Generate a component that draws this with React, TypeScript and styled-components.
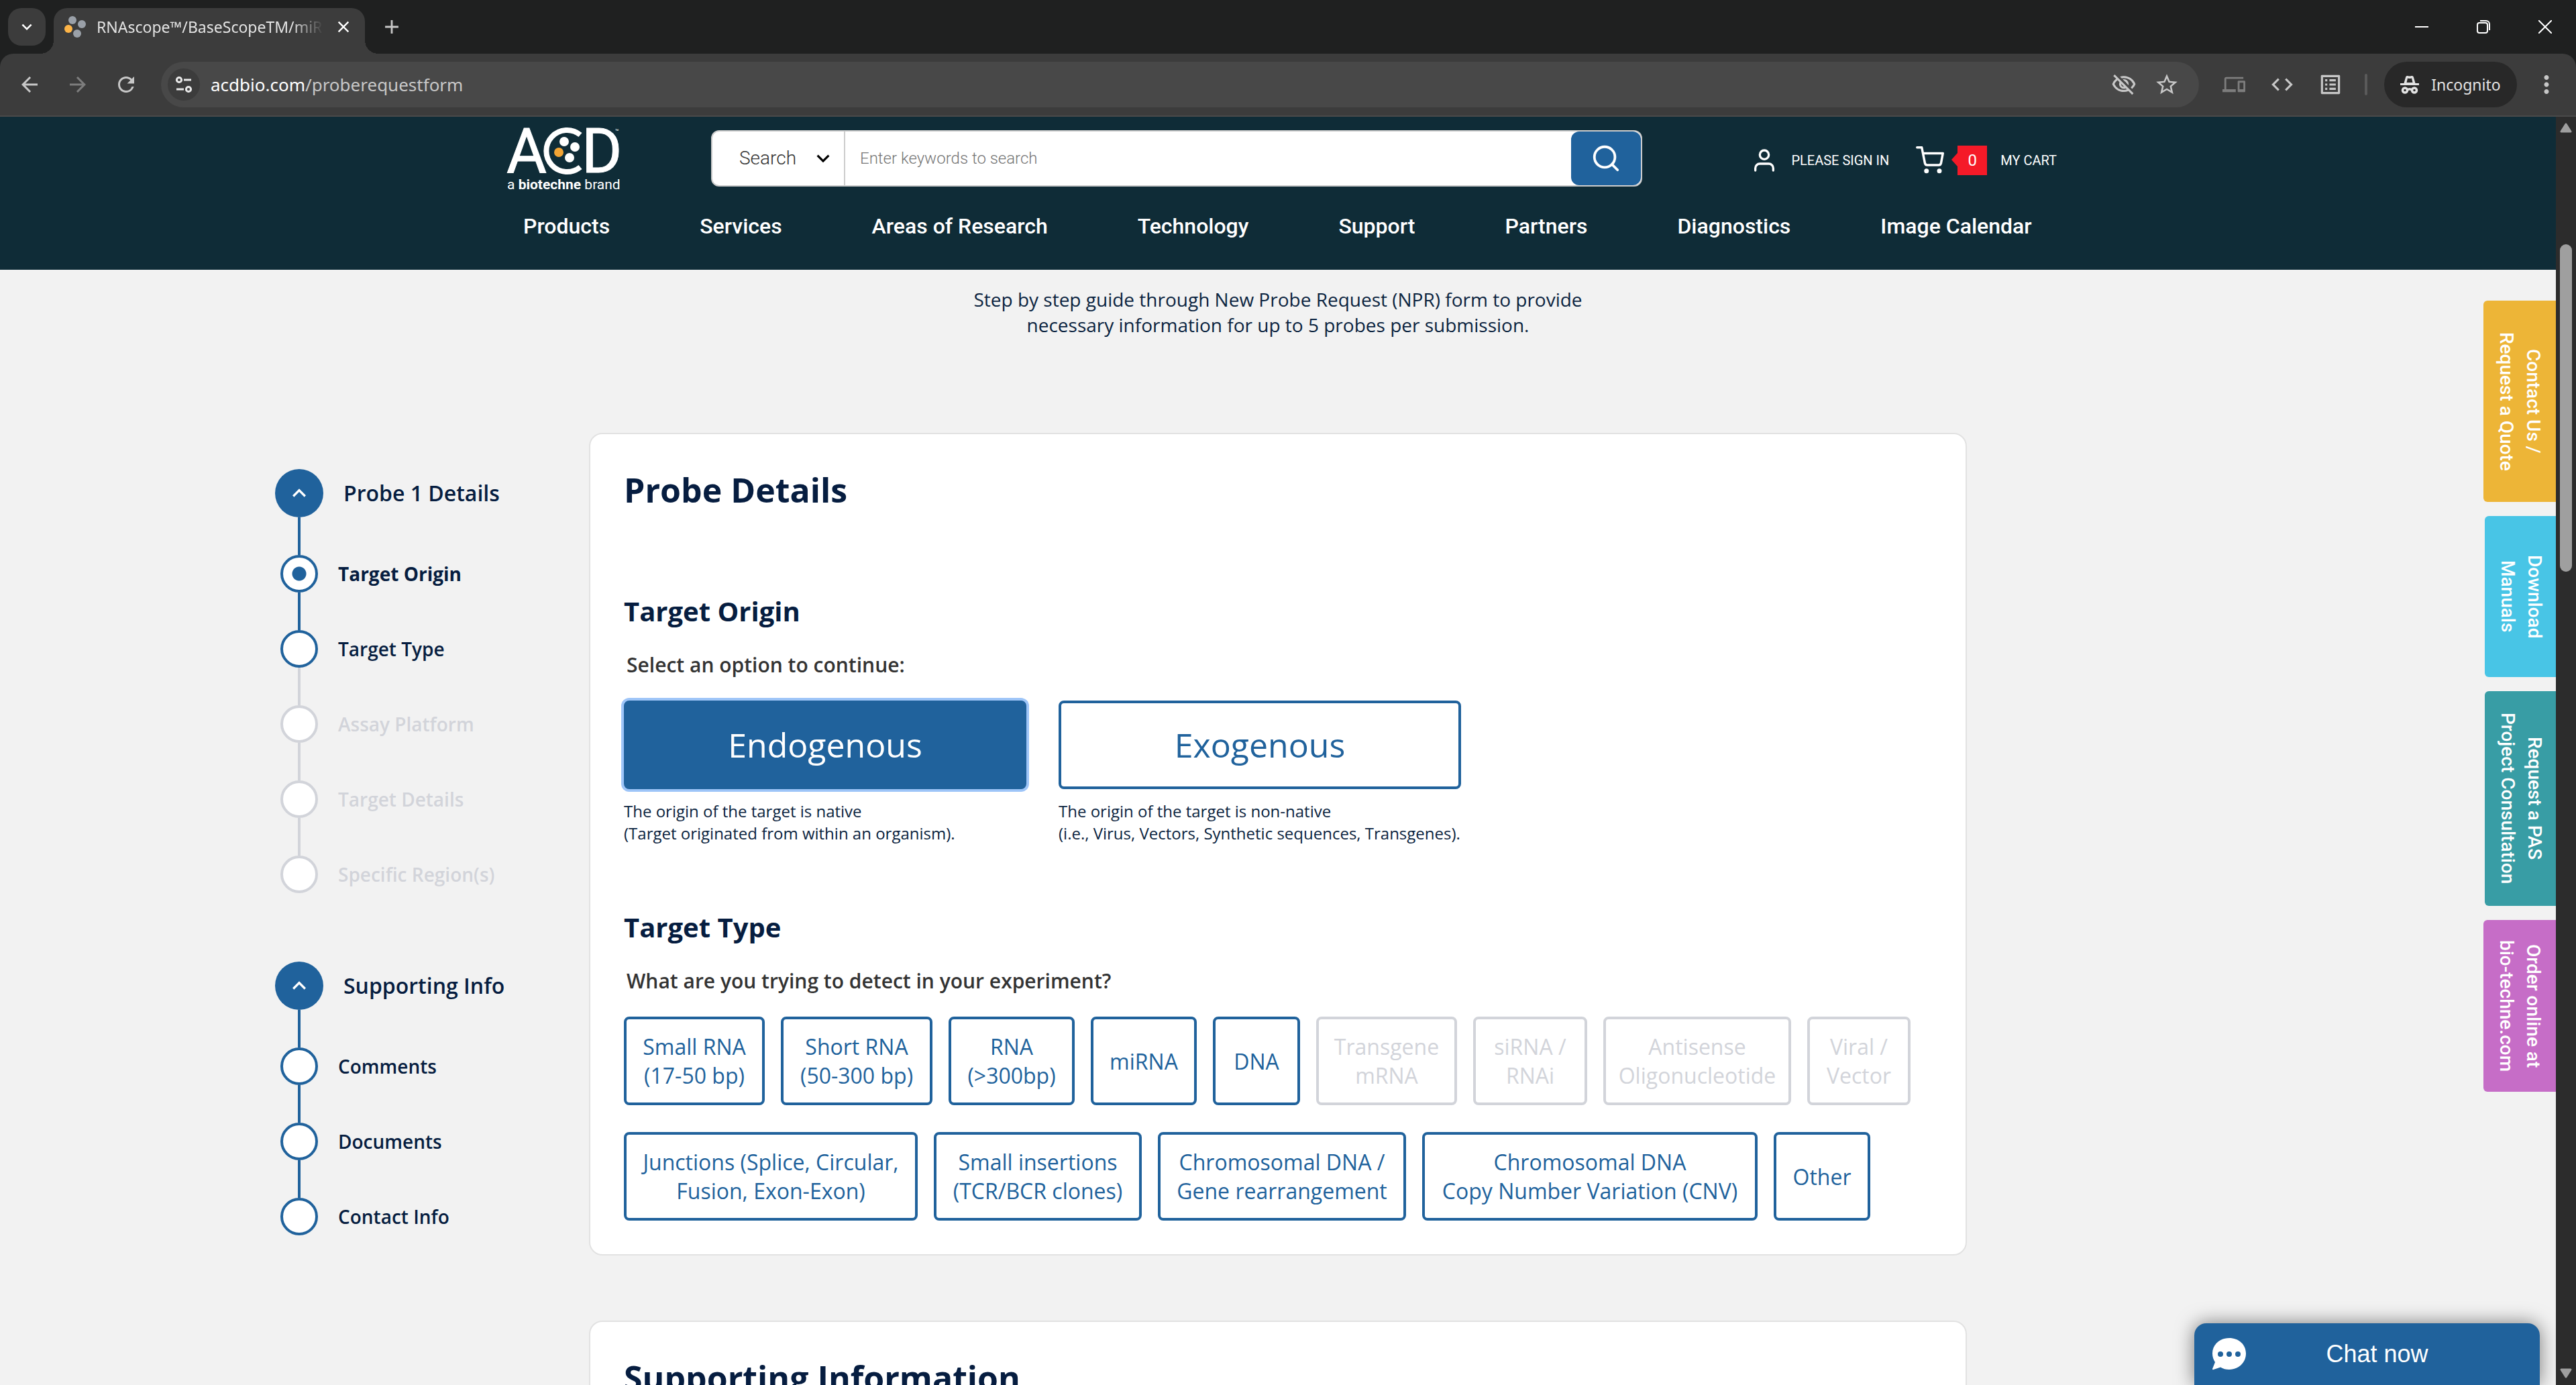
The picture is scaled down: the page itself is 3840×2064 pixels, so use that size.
import React from "react";
import styled, { createGlobalStyle, css } from "styled-components";
import {
  MdAdd,
  MdArrowBack,
  MdArrowForward,
  MdClose,
  MdCode,
  MdDevices,
  MdKeyboardArrowDown,
  MdKeyboardArrowUp,
  MdMoreVert,
  MdOutlineListAlt,
  MdOutlineVisibilityOff,
  MdRefresh,
  MdStarBorder,
} from "react-icons/md";
import { FiSearch, FiShoppingCart, FiUser } from "react-icons/fi";

const color = {
  frame: "#1f2020",
  toolbar: "#3c3c3c",
  omnibox: "#484848",
  teal: "#0f2c37",
  blue: "#20629c",
  navy: "#061d40",
  muted: "#d2d4da",
  page: "#f2f2f2",
  icon: "#c7c7c7",
};

const chromeFont = '"Noto Sans", "Open Sans", sans-serif';
const openSans = '"Open Sans", sans-serif';
const roboto = 'Roboto, "Liberation Sans", sans-serif';

const GlobalStyle = createGlobalStyle`
  *, *::before, *::after { box-sizing: border-box; }
  body { margin: 0; background: ${color.page}; font-family: ${openSans}; }
  button, input, select { font: inherit; margin: 0; }
  button { cursor: pointer; }
  h1, h2, p, ul, ol { margin: 0; padding: 0; }
  ul, ol { list-style: none; }
  a { text-decoration: none; color: inherit; }
  svg { display: block; flex: none; }
`;

const Window = styled.div`
  display: flex;
  flex-direction: column;
  height: 100vh;
  overflow: hidden;
`;

/* ---------- browser frame ---------- */

const TabStrip = styled.div`
  display: flex;
  height: 80px;
  padding: 12px 0 0 12px;
  background: ${color.frame};
`;

const PlainButton = styled.button`
  display: flex;
  align-items: center;
  justify-content: center;
  padding: 0;
  border: 0;
  background: none;
  color: ${color.icon};
`;

const TabSearch = styled(PlainButton)`
  width: 56px;
  height: 56px;
  border-radius: 20px;
  background: ${color.toolbar};
  color: #ffffff;
`;

const Tab = styled.div`
  position: relative;
  display: flex;
  align-items: center;
  width: 464px;
  height: 68px;
  margin-left: 12px;
  padding: 0 18px 12px 16px;
  border-radius: 20px 20px 0 0;
  background: ${color.toolbar};
  color: #e3e3e3;
  font: 400 23px/32px ${chromeFont};

  &::before,
  &::after {
    content: "";
    position: absolute;
    bottom: 0;
    width: 20px;
    height: 20px;
  }
  &::before {
    left: -20px;
    background: radial-gradient(circle at 0 0, transparent 20px, ${color.toolbar} 20px);
  }
  &::after {
    right: -20px;
    background: radial-gradient(circle at 100% 0, transparent 20px, ${color.toolbar} 20px);
  }
`;

const TabTitle = styled.span`
  flex: 1;
  min-width: 0;
  margin: 0 16px;
  white-space: nowrap;
  mask-image: linear-gradient(90deg, #000 86%, transparent);
`;

const NewTab = styled(PlainButton)`
  width: 56px;
  height: 56px;
  margin-left: 12px;
`;

const WindowControls = styled.div`
  display: flex;
  margin-left: auto;
`;

const WindowButton = styled(PlainButton)`
  width: 92px;
  height: 56px;
  color: #ffffff;
`;

const Toolbar = styled.div`
  background: ${color.frame};
`;

const ToolbarRow = styled.div`
  display: flex;
  align-items: center;
  height: 94px;
  padding: 12px 20px 12px 8px;
  border-bottom: 2px solid #4a4a4a;
  border-radius: 20px 20px 0 0;
  background: ${color.toolbar};
`;

const ToolButton = styled(PlainButton)<{ $dim?: boolean }>`
  width: 72px;
  height: 68px;
  color: ${(p) => (p.$dim ? "#7d7d7d" : color.icon)};
`;

const Omnibox = styled.div`
  display: flex;
  flex: 1;
  align-items: center;
  height: 68px;
  margin: 0 16px;
  padding: 0 16px 0 10px;
  border-radius: 34px;
  background: ${color.omnibox};
`;

const SiteInfo = styled(PlainButton)`
  width: 48px;
  height: 48px;
  border-radius: 50%;
  background: ${color.toolbar};
  color: #e8e8e8;
`;

const Address = styled.div`
  flex: 1;
  margin-left: 16px;
  color: #c7c7c7;
  font: 400 26px/40px ${chromeFont};

  b {
    color: #ffffff;
    font-weight: 400;
  }
`;

const OmniboxButton = styled(PlainButton)`
  width: 64px;
  height: 56px;
`;

const Divider = styled.span`
  width: 4px;
  height: 32px;
  margin: 0 25px 0 15px;
  border-radius: 2px;
  background: #5a5a5a;
`;

const IncognitoChip = styled.button`
  display: flex;
  align-items: center;
  justify-content: center;
  gap: 18px;
  width: 198px;
  height: 68px;
  padding: 0;
  border: 0;
  border-radius: 34px;
  background: #282828;
  color: #e3e3e3;
  font: 400 23px/32px ${chromeFont};
`;

const MenuButton = styled(PlainButton)`
  width: 48px;
  height: 48px;
  margin-left: 20px;
`;

const Viewport = styled.div`
  display: flex;
  flex: 1;
  min-height: 0;
`;

const Page = styled.div`
  position: relative;
  flex: 1;
  min-width: 0;
  overflow: hidden;
  background: ${color.page};
`;

const ScrollTrack = styled.div`
  display: flex;
  flex-direction: column;
  align-items: center;
  width: 30px;
  padding: 8px 0 9px;
  background: #2c2c2c;
`;

const ScrollThumb = styled.div`
  width: 18px;
  height: 488px;
  margin: 166px 0 auto;
  border-radius: 9px;
  background: #9f9f9f;
`;

/* ---------- site header ---------- */

const SiteHeader = styled.header`
  height: 228px;
  background: ${color.teal};
  color: #ffffff;
  font-family: ${roboto};
`;

const HeaderInner = styled.div`
  width: 100%;
  max-width: 2322px;
  margin: 0 auto;
  padding-left: 12px;
`;

const HeaderTop = styled.div`
  display: flex;
  align-items: center;
  padding-top: 15px;
`;

const LogoLink = styled.a`
  margin-right: 132px;
`;

const SearchBar = styled.form`
  display: flex;
  flex: 1;
  max-width: 1390px;
  height: 84px;
  margin-top: -6px;
  border: 2px solid #cccccc;
  border-radius: 12px;
  background: #ffffff;
`;

const SearchScope = styled.label`
  display: flex;
  align-items: center;
  width: 198px;
  padding: 0 12px 0 40px;
  border-right: 2px solid #cccccc;
  color: #000000;
`;

const ScopeSelect = styled.select`
  flex: 1;
  min-width: 0;
  padding: 0;
  border: 0;
  background: none;
  appearance: none;
  color: #333333;
  font: 300 28px/40px ${roboto};
`;

const SearchInput = styled.input`
  flex: 1;
  min-width: 0;
  padding: 0 22px;
  border: 0;
  background: none;
  color: #333333;
  font: 300 24px/40px ${roboto};

  &::placeholder {
    color: #757575;
    opacity: 1;
  }
`;

const SearchSubmit = styled(PlainButton)`
  width: 104px;
  border-radius: 12px;
  background: ${color.blue};
  color: #ffffff;
`;

const Account = styled.a`
  display: flex;
  align-items: center;
  gap: 20px;
  margin-left: 162px;
  font-size: 20px;
  line-height: 28px;
  white-space: nowrap;
`;

const Cart = styled.a`
  display: flex;
  align-items: center;
  margin-left: 40px;
  font-size: 20px;
  line-height: 28px;
  white-space: nowrap;
`;

const CartCount = styled.span`
  position: relative;
  width: 44px;
  height: 44px;
  margin: 0 20px;
  background: #f51a28;
  font-size: 24px;
  line-height: 44px;
  text-align: center;

  &::before {
    content: "";
    position: absolute;
    top: 11px;
    left: -9px;
    border: solid transparent;
    border-width: 10px 9px 10px 0;
    border-right-color: #f51a28;
  }
`;

const MainNav = styled.nav`
  display: flex;
  gap: 134px;
  padding: 24px 0 0 24px;
  font-size: 32px;
  font-weight: 500;
  line-height: 48px;
  white-space: nowrap;
`;

/* ---------- form layout ---------- */

const Intro = styled.p`
  padding: 25px 0 142px;
  color: #0b2440;
  font-size: 28px;
  line-height: 38px;
  text-align: center;
`;

const Layout = styled.div`
  display: grid;
  grid-template-columns: 1fr minmax(0, 2054px) 1fr;
`;

const Steps = styled.nav`
  justify-self: end;
  width: 468px;
  padding-top: 54px;
  color: ${color.navy};
`;

const StepGroup = styled.section`
  & + & {
    margin-top: 102px;
  }
`;

const stepRow = css`
  display: flex;
  align-items: center;
  padding: 0;
  border: 0;
  background: none;
  color: inherit;
`;

const GroupToggle = styled.button`
  ${stepRow}
  gap: 30px;
  font-size: 32px;
  font-weight: 600;
  line-height: 44px;
`;

const GroupIcon = styled.span`
  display: flex;
  align-items: center;
  justify-content: center;
  width: 72px;
  height: 72px;
  border-radius: 50%;
  background: ${color.blue};
  color: #ffffff;
`;

const StepItem = styled.li<{ $muted?: boolean }>`
  color: ${(p) => (p.$muted ? color.muted : color.navy)};

  &::before {
    content: "";
    display: block;
    width: 4px;
    height: 56px;
    margin-left: 34px;
    background: ${(p) => (p.$muted ? color.muted : color.blue)};
  }
`;

const StepButton = styled.button<{ $current?: boolean }>`
  ${stepRow}
  gap: 30px;
  margin-left: 8px;
  font-size: 28px;
  font-weight: ${(p) => (p.$current ? 700 : 600)};
  line-height: 38px;
`;

const Marker = styled.span<{ $muted?: boolean; $current?: boolean }>`
  width: 56px;
  height: 56px;
  border: 4px solid ${(p) => (p.$muted ? color.muted : color.blue)};
  border-radius: 50%;
  background: ${(p) =>
    p.$current
      ? `radial-gradient(circle, ${color.blue} 10px, #ffffff 11px)`
      : "#ffffff"};
`;

const Cards = styled.main`
  display: flex;
  flex-direction: column;
  gap: 97px;
`;

const Card = styled.section`
  padding: 50px;
  border: 2px solid #e2e2e2;
  border-radius: 20px;
  background: #ffffff;
`;

const CardTitle = styled.h1`
  color: ${color.navy};
  font-size: 50px;
  font-weight: 700;
  line-height: 66px;
`;

const Question = styled.section<{ $top: number }>`
  margin-top: ${(p) => p.$top}px;
`;

const QuestionTitle = styled.h2`
  color: ${color.navy};
  font-size: 40px;
  font-weight: 700;
  line-height: 56px;
`;

const Prompt = styled.p`
  margin: 31px 0 32px 4px;
  color: #333333;
  font-size: 30px;
  font-weight: 600;
  line-height: 42px;
`;

const OriginRow = styled.div`
  display: flex;
  gap: 48px;
`;

const Origin = styled.div`
  width: 600px;
  color: #0b2440;
  font-size: 24px;
  line-height: 33px;
  white-space: pre-line;
`;

const OriginButton = styled.button<{ $active?: boolean }>`
  display: block;
  width: 100%;
  height: 132px;
  margin-bottom: 16px;
  border: 4px solid ${color.blue};
  border-radius: 8px;
  background: ${(p) => (p.$active ? color.blue : "#ffffff")};
  box-shadow: ${(p) => (p.$active ? "0 0 0 4px #9ec5f8" : "none")};
  color: ${(p) => (p.$active ? "#ffffff" : color.blue)};
  font-size: 50px;
  line-height: 68px;
`;

const TypeRow = styled.div`
  display: flex;
  flex-wrap: wrap;
  gap: 24px;

  & + & {
    margin-top: 40px;
  }
`;

const TypeButton = styled.button<{ $width: number }>`
  width: ${(p) => p.$width}px;
  height: 132px;
  padding: 0;
  border: 4px solid ${color.blue};
  border-radius: 8px;
  background: #ffffff;
  color: ${color.blue};
  font-size: 32px;
  line-height: 43px;
  white-space: pre;

  &:disabled {
    border-color: ${color.muted};
    color: ${color.muted};
  }
`;

/* ---------- floating links ---------- */

const SideTabs = styled.aside`
  position: absolute;
  top: 274px;
  right: 0;
  display: flex;
  flex-direction: column;
  align-items: flex-end;
  gap: 21px;
`;

const SideTab = styled.a<{ $bg: string; $length: number; $inset: number }>`
  height: ${(p) => p.$length}px;
  padding: 0 ${(p) => p.$inset}px 0 14px;
  border-radius: 6px 0 0 6px;
  background: ${(p) => p.$bg};
  color: #ffffff;
  font: 500 28px/40px ${roboto};
  text-align: center;
  white-space: pre-line;
  writing-mode: vertical-rl;
`;

const ChatButton = styled.button`
  position: absolute;
  right: 24px;
  bottom: 0;
  display: flex;
  align-items: center;
  width: 515px;
  height: 92px;
  padding: 0 48px 0 26px;
  border: 0;
  border-radius: 18px 18px 0 0;
  background: ${color.blue};
  box-shadow: 0 0 28px rgba(0, 0, 0, 0.5);
  color: #ffffff;
  font: 400 36px/44px "Liberation Sans", Arial, sans-serif;

  span {
    flex: 1;
    text-align: center;
  }
`;

/* ---------- drawings ---------- */

const Favicon = () => (
  <svg width="32" height="32" viewBox="0 0 32 32" aria-hidden="true">
    <circle cx="12" cy="6" r="6" fill="#9aa0a8" />
    <circle cx="26" cy="12" r="6" fill="#9aa0a8" />
    <circle cx="6" cy="19" r="6" fill="#fdb447" />
    <circle cx="19" cy="26" r="6" fill="#9aa0a8" />
  </svg>
);

const TuneIcon = () => (
  <svg width="26" height="26" viewBox="0 0 26 26" fill="none" stroke="currentColor" strokeWidth="3" aria-hidden="true">
    <circle cx="6" cy="6" r="3.6" />
    <path d="M13 6h11M2 20h11" />
    <circle cx="20" cy="20" r="3.6" />
  </svg>
);

const IncognitoIcon = () => (
  <svg width="28" height="28" viewBox="0 0 28 28" aria-hidden="true">
    <path
      d="M5.500 12 8 3.200C8.600 1 10 .6 11.800 1.200c1.400.5 3 .5 4.400 0C18 .6 19.400 1 20 3.200L22.500 12z"
      fill="currentColor"
    />
    <path d="M11 4.500 9.500 11h9L17 4.500c-2 .8-4 .8-6 0z" fill="#282828" />
    <path d="M0 12h28v3H0z" fill="currentColor" />
    <g fill="none" stroke="currentColor" strokeWidth="3.5">
      <circle cx="7" cy="22.500" r="3.500" />
      <circle cx="21" cy="22.500" r="3.500" />
      <path d="M10.500 22c2-1.500 5-1.500 7 0" />
    </g>
  </svg>
);

const MinimizeIcon = () => (
  <svg width="20" height="20" viewBox="0 0 20 20" aria-hidden="true">
    <path d="M0 10h20" stroke="currentColor" strokeWidth="2" />
  </svg>
);

const RestoreIcon = () => (
  <svg width="20" height="20" viewBox="0 0 20 20" fill="none" stroke="currentColor" strokeWidth="2" aria-hidden="true">
    <rect x="1" y="4" width="15" height="15" rx="3" />
    <path d="M5 1h9a5 5 0 0 1 5 5v9" />
  </svg>
);

const CloseIcon = () => (
  <svg width="20" height="20" viewBox="0 0 20 20" aria-hidden="true">
    <path d="m0 0 20 20M20 0 0 20" stroke="currentColor" strokeWidth="2" />
  </svg>
);

const ScrollArrow = ({ down }: { down?: boolean }) => (
  <svg width="20" height="16" viewBox="0 0 20 16" aria-hidden="true">
    <path
      d={down ? "M3 2h14l-7 11z" : "M3 14h14L10 3z"}
      fill="#9f9f9f"
      stroke="#9f9f9f"
      strokeWidth="3"
      strokeLinejoin="round"
    />
  </svg>
);

const AcdLogo = () => (
  <svg width="172" height="100" viewBox="0 0 172 100" overflow="visible" role="img" aria-label="ACD, a biotechne brand">
    <g fill="#ffffff" fontFamily="Roboto, sans-serif">
      <g fontSize="92" fontWeight="400">
        <text x="-1" y="68" stroke="#ffffff" strokeWidth="1">A</text>
        <text x="111" y="68" stroke="#ffffff" strokeWidth="1">D</text>
      </g>
      <text x="161" y="10" fontSize="9">™</text>
      <text x="0" y="93" fontSize="21" fontWeight="400">
        a <tspan fontWeight="700">biotechne</tspan> brand
      </text>
    </g>
    <path d="M109 12A31 31 0 1 0 109 60" fill="none" stroke="#0f2c37" strokeWidth="14" />
    <path d="M109 12A31 31 0 1 0 109 60" fill="none" stroke="#ffffff" strokeWidth="8" />
    <circle cx="85" cy="22" r="7" fill="#ffffff" />
    <circle cx="101" cy="30" r="7" fill="#ffffff" />
    <circle cx="77" cy="38" r="7" fill="#f3a434" />
    <circle cx="93" cy="46" r="7" fill="#ffffff" />
  </svg>
);

const ChatIcon = () => (
  <svg width="52" height="50" viewBox="0 0 52 50" aria-hidden="true">
    <path
      d="M26 1C12 1 1 11 1 24c0 5 1.500 9 4 13L1 47c0 1 .5 1.500 1.500 1L13 44.500C17 47 21 48 26 48c14 0 25-10.500 25-24S40 1 26 1z"
      fill="#ffffff"
    />
    <circle cx="13" cy="25" r="4" fill="#20629c" />
    <circle cx="26" cy="25" r="4" fill="#20629c" />
    <circle cx="39" cy="25" r="4" fill="#20629c" />
  </svg>
);

/* ---------- content ---------- */

const navLinks = [
  "Products",
  "Services",
  "Areas of Research",
  "Technology",
  "Support",
  "Partners",
  "Diagnostics",
  "Image Calendar",
];

type Step = { label: string; current?: boolean; muted?: boolean };

const stepGroups: { title: string; steps: Step[] }[] = [
  {
    title: "Probe 1 Details",
    steps: [
      { label: "Target Origin", current: true },
      { label: "Target Type" },
      { label: "Assay Platform", muted: true },
      { label: "Target Details", muted: true },
      { label: "Specific Region(s)", muted: true },
    ],
  },
  {
    title: "Supporting Info",
    steps: [{ label: "Comments" }, { label: "Documents" }, { label: "Contact Info" }],
  },
];

const typeRows: { label: string; width: number; disabled?: boolean }[][] = [
  [
    { label: "Small RNA\n(17-50 bp)", width: 210 },
    { label: "Short RNA\n(50-300 bp)", width: 226 },
    { label: "RNA\n(>300bp)", width: 188 },
    { label: "miRNA", width: 158 },
    { label: "DNA", width: 130 },
    { label: "Transgene\nmRNA", width: 210, disabled: true },
    { label: "siRNA /\nRNAi", width: 170, disabled: true },
    { label: "Antisense\nOligonucleotide", width: 280, disabled: true },
    { label: "Viral /\nVector", width: 154, disabled: true },
  ],
  [
    { label: "Junctions (Splice, Circular,\nFusion, Exon-Exon)", width: 438 },
    { label: "Small insertions\n(TCR/BCR clones)", width: 310 },
    { label: "Chromosomal DNA /\nGene rearrangement", width: 370 },
    { label: "Chromosomal DNA\nCopy Number Variation (CNV)", width: 500 },
    { label: "Other", width: 144 },
  ],
];

const sideLinks = [
  { label: "Contact Us /\nRequest a Quote", bg: "#edb537", length: 300, inset: 14 },
  { label: "Download\nManuals", bg: "#48c5e6", length: 240, inset: 12 },
  { label: "Request a PAS\nProject Consultation", bg: "#389da5", length: 320, inset: 12 },
  { label: "Order online at\nbio-techne.com", bg: "#c66dc7", length: 256, inset: 14 },
];

const BrowserFrame = () => (
  <>
    <TabStrip>
      <TabSearch aria-label="Search tabs">
        <MdKeyboardArrowDown size={30} />
      </TabSearch>
      <Tab>
        <Favicon />
        <TabTitle>RNAscope™/BaseScopeTM/miR</TabTitle>
        <PlainButton aria-label="Close tab">
          <MdClose size={28} color="#ffffff" />
        </PlainButton>
      </Tab>
      <NewTab aria-label="New tab">
        <MdAdd size={34} />
      </NewTab>
      <WindowControls>
        <WindowButton aria-label="Minimize"><MinimizeIcon /></WindowButton>
        <WindowButton aria-label="Restore"><RestoreIcon /></WindowButton>
        <WindowButton aria-label="Close"><CloseIcon /></WindowButton>
      </WindowControls>
    </TabStrip>
    <Toolbar>
      <ToolbarRow>
        <ToolButton aria-label="Back"><MdArrowBack size={36} /></ToolButton>
        <ToolButton aria-label="Forward" $dim><MdArrowForward size={36} /></ToolButton>
        <ToolButton aria-label="Reload"><MdRefresh size={36} /></ToolButton>
        <Omnibox>
          <SiteInfo aria-label="Site information"><TuneIcon /></SiteInfo>
          <Address><b>acdbio.com</b>/proberequestform</Address>
          <OmniboxButton aria-label="Third-party cookies blocked">
            <MdOutlineVisibilityOff size={38} />
          </OmniboxButton>
          <OmniboxButton aria-label="Bookmark this page">
            <MdStarBorder size={38} />
          </OmniboxButton>
        </Omnibox>
        <ToolButton aria-label="Send to device" $dim><MdDevices size={34} /></ToolButton>
        <ToolButton aria-label="Developer tools"><MdCode size={38} /></ToolButton>
        <ToolButton aria-label="Reading list"><MdOutlineListAlt size={38} /></ToolButton>
        <Divider />
        <IncognitoChip>
          <IncognitoIcon />
          Incognito
        </IncognitoChip>
        <MenuButton aria-label="Menu"><MdMoreVert size={42} /></MenuButton>
      </ToolbarRow>
    </Toolbar>
  </>
);

const Header = () => (
  <SiteHeader>
    <HeaderInner>
      <HeaderTop>
        <LogoLink href="#home"><AcdLogo /></LogoLink>
        <SearchBar role="search" onSubmit={(e) => e.preventDefault()}>
          <SearchScope>
            <ScopeSelect aria-label="Search scope">
              <option>Search</option>
            </ScopeSelect>
            <MdKeyboardArrowDown size={38} />
          </SearchScope>
          <SearchInput aria-label="Keywords" placeholder="Enter keywords to search" />
          <SearchSubmit type="submit" aria-label="Search"><FiSearch size={46} /></SearchSubmit>
        </SearchBar>
        <Account href="#signin">
          <FiUser size={40} />
          PLEASE SIGN IN
        </Account>
        <Cart href="#cart">
          <FiShoppingCart size={42} />
          <CartCount>0</CartCount>
          MY CART
        </Cart>
      </HeaderTop>
      <MainNav>
        {navLinks.map((label) => (
          <a key={label} href="#nav">{label}</a>
        ))}
      </MainNav>
    </HeaderInner>
  </SiteHeader>
);

const StepNav = () => (
  <Steps aria-label="Form steps">
    {stepGroups.map((group) => (
      <StepGroup key={group.title}>
        <GroupToggle aria-expanded="true">
          <GroupIcon><MdKeyboardArrowUp size={40} /></GroupIcon>
          {group.title}
        </GroupToggle>
        <ol>
          {group.steps.map((s) => (
            <StepItem key={s.label} $muted={s.muted}>
              <StepButton $current={s.current}>
                <Marker $muted={s.muted} $current={s.current} />
                {s.label}
              </StepButton>
            </StepItem>
          ))}
        </ol>
      </StepGroup>
    ))}
  </Steps>
);

export default function App() {
  return (
    <>
      <GlobalStyle />
      <Window>
        <BrowserFrame />
        <Viewport>
          <Page>
            <Header />
            <Intro>
              Step by step guide through New Probe Request (NPR) form to provide
              <br />
              necessary information for up to 5 probes per submission.
            </Intro>
            <Layout>
              <StepNav />
              <Cards>
                <Card>
                  <CardTitle>Probe Details</CardTitle>
                  <Question $top={120}>
                    <QuestionTitle>Target Origin</QuestionTitle>
                    <Prompt>Select an option to continue:</Prompt>
                    <OriginRow>
                      <Origin>
                        <OriginButton $active aria-pressed="true">Endogenous</OriginButton>
                        {"The origin of the target is native\n(Target originated from within an organism)."}
                      </Origin>
                      <Origin>
                        <OriginButton aria-pressed="false">Exogenous</OriginButton>
                        {"The origin of the target is non-native\n(i.e., Virus, Vectors, Synthetic sequences, Transgenes)."}
                      </Origin>
                    </OriginRow>
                  </Question>
                  <Question $top={96}>
                    <QuestionTitle>Target Type</QuestionTitle>
                    <Prompt>What are you trying to detect in your experiment?</Prompt>
                    {typeRows.map((row, i) => (
                      <TypeRow key={i}>
                        {row.map((t) => (
                          <TypeButton key={t.label} $width={t.width} disabled={t.disabled}>
                            {t.label}
                          </TypeButton>
                        ))}
                      </TypeRow>
                    ))}
                  </Question>
                </Card>
                <Card>
                  <CardTitle>Supporting Information</CardTitle>
                </Card>
              </Cards>
            </Layout>
            <SideTabs>
              {sideLinks.map((l) => (
                <SideTab key={l.label} href="#link" $bg={l.bg} $length={l.length} $inset={l.inset}>
                  {l.label}
                </SideTab>
              ))}
            </SideTabs>
            <ChatButton>
              <ChatIcon />
              <span>Chat now</span>
            </ChatButton>
          </Page>
          <ScrollTrack>
            <ScrollArrow />
            <ScrollThumb />
            <ScrollArrow down />
          </ScrollTrack>
        </Viewport>
      </Window>
    </>
  );
}
